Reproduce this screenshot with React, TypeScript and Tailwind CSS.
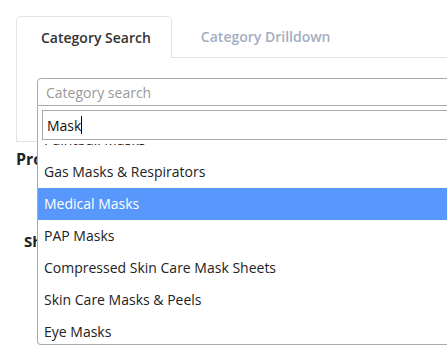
import React, { useEffect, useRef } from 'react';

const options = [
  'Paintball Masks',
  'Gas Masks & Respirators',
  'Medical Masks',
  'PAP Masks',
  'Compressed Skin Care Mask Sheets',
  'Skin Care Masks & Peels',
  'Eye Masks',
  'Sleep Masks',
];

const App: React.FC = () => {
  const listRef = useRef<HTMLUListElement>(null);

  useEffect(() => {
    if (listRef.current) listRef.current.scrollTop = 20;
  }, []);

  return (
    <div className="w-screen h-screen overflow-hidden bg-white font-['Open_Sans',sans-serif]">
      <div className="w-[620px] pt-4 pl-4">
        {/* Tabs */}
        <div className="flex h-[42px]">
          <div className="flex items-center pl-[24px] pr-[20px] border border-b-0 border-[#e3e3e3] rounded-t-[5px] text-[14px] font-semibold text-[#333]">
            Category Search
          </div>
          <div className="flex-1 flex items-center pl-[29px] border-b border-[#e3e3e3] text-[14px] font-semibold text-[#a3adc2]">
            Category Drilldown
          </div>
        </div>

        {/* Panel */}
        <div className="border-l border-b border-[#e3e3e3] px-5 pt-[20px] pb-[35px]">
          <div className="relative">
            <div className="h-[28px] flex items-center px-[8px] border border-[#aaa] rounded-t-[4px] text-[14px] text-[#999]">
              Category search
            </div>

            {/* Dropdown */}
            <div className="absolute left-0 right-0 top-[28px] z-10 bg-white border border-t-0 border-[#aaa] rounded-b-[4px]">
              <div className="p-[4px]">
                <div className="h-[30px] flex items-center px-[4px] border border-[#aaa] text-[14px] text-[#111]">
                  Mask
                  <span className="w-px h-[18px] bg-black" />
                </div>
              </div>
              <ul ref={listRef} className="max-h-[200px] overflow-y-auto">
                {options.map((o) => (
                  <li
                    key={o}
                    className={`px-[6px] py-[6px] text-[14px] leading-[20px] ${o === 'Medical Masks' ? 'bg-[#5897fb] text-white' : 'text-[#222]'}`}
                  >
                    {o}
                  </li>
                ))}
              </ul>
            </div>
          </div>
        </div>

        {/* Content under the dropdown */}
        <h3 className="mt-[5px] text-[16px] font-bold text-[#222]">Product Category</h3>
        <div className="mt-[59px] pl-2 text-[15px] font-bold text-[#222]">Shipping Template</div>
      </div>
    </div>
  );
};

export default App;
